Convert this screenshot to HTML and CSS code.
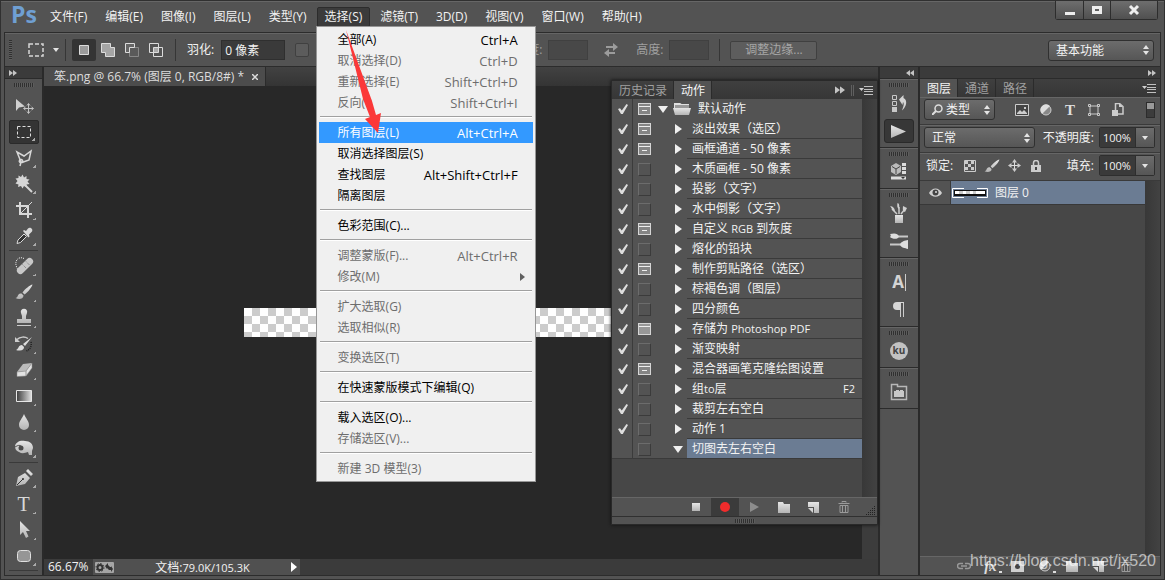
FILE: index.html
```html
<!DOCTYPE html>
<html lang="zh-CN">
<head>
<meta charset="utf-8">
<title>Ps</title>
<link rel="stylesheet" href="styles.css">
</head>
<body>
<svg class="defs" aria-hidden="true">
  <defs>
    <linearGradient id="silver" x1="0" y1="0" x2="0" y2="1"><stop offset="0" stop-color="#e6e6e6"/><stop offset="1" stop-color="#b4b4b4"/></linearGradient>
    <linearGradient id="fade"><stop offset="0" stop-color="#3c3c3c"/><stop offset="1" stop-color="#e0e0e0"/></linearGradient>
    <symbol id="updown" viewBox="0 0 6 10"><path d="M0 4 3 0l3 4zM0 6h6L3 10z" fill="#e4e4e4"/></symbol>
    <symbol id="down" viewBox="0 0 6 4"><path d="M0 0h6L3 4z" fill="#e4e4e4"/></symbol>
    <symbol id="right" viewBox="0 0 7 10"><path d="M0 0 7 5 0 10z" fill="#f0f0f0"/></symbol>
    <symbol id="open" viewBox="0 0 10 7"><path d="M0 0h10L5 7z" fill="#f0f0f0"/></symbol>
    <symbol id="rewind" viewBox="0 0 8 6"><path d="M4 0v6L0 3zM8 0v6L4 3z" fill="#c4c4c4"/></symbol>
    <symbol id="forward" viewBox="0 0 8 6"><path d="M0 0v6l4-3zM4 0v6l4-3z" fill="#c4c4c4"/></symbol>
    <symbol id="flyout" viewBox="0 0 14 9"><path d="M0 2h5L2.500 5z" fill="#d0d0d0"/><path d="M5 .5h9M5 3.500h9M5 5.500h9M5 8.500h9" stroke="#c0c0c0"/></symbol>
    <symbol id="folder" viewBox="0 0 12 11"><path d="M0 0h5l1 2h6v9H0z" fill="url(#silver)"/></symbol>
    <symbol id="sheet" viewBox="0 0 12 11"><path d="M0 0h11v11H6V5H0z" fill="url(#silver)"/><path d="M0 6h5v5z" fill="#d5d5d5"/></symbol>
    <symbol id="trash" viewBox="0 0 12 12"><path d="M4 1.500V.5h4v1M.5 2.500h11M2 4.500v7h8v-7zM4.500 5v6M7.500 5v6" fill="none" stroke="#9a9a9a"/></symbol>
    <symbol id="brush" viewBox="0 0 18 16"><path d="M17.500.5C15 1 10 5 7.500 8.500l2 2C13 8 17 3 17.500.5zM6.500 9.500C4 9 3 11 2.500 12.500c-.5 1-1 1-2 1.500 2.500 1.500 8 1.500 8-2.500z" fill="url(#silver)"/></symbol>
  </defs>
</svg>

<div class="app">
  <header class="titlebar">
    <span class="logo">Ps</span>
    <nav class="menus">
      <button>文件(F)</button>
      <button>编辑(E)</button>
      <button>图像(I)</button>
      <button>图层(L)</button>
      <button>类型(Y)</button>
      <div class="menu-host">
        <button class="is-open" aria-expanded="true">选择(S)</button>
        <div class="dropdown">
          <button>全部(A)<kbd>Ctrl+A</kbd></button>
          <button disabled>取消选择(D)<kbd>Ctrl+D</kbd></button>
          <button disabled>重新选择(E)<kbd>Shift+Ctrl+D</kbd></button>
          <button disabled>反向(I)<kbd>Shift+Ctrl+I</kbd></button>
          <hr>
          <button class="is-hot">所有图层(L)<kbd>Alt+Ctrl+A</kbd></button>
          <button>取消选择图层(S)</button>
          <button>查找图层<kbd>Alt+Shift+Ctrl+F</kbd></button>
          <button>隔离图层</button>
          <hr>
          <button>色彩范围(C)...</button>
          <hr>
          <button disabled>调整蒙版(F)...<kbd>Alt+Ctrl+R</kbd></button>
          <button class="has-sub" disabled>修改(M)<svg width="5" height="8" viewBox="0 0 5 8"><path d="M0 0 5 4 0 8z" fill="#606060"/></svg></button>
          <hr>
          <button disabled>扩大选取(G)</button>
          <button disabled>选取相似(R)</button>
          <hr>
          <button disabled>变换选区(T)</button>
          <hr>
          <button>在快速蒙版模式下编辑(Q)</button>
          <hr>
          <button>载入选区(O)...</button>
          <button disabled>存储选区(V)...</button>
          <hr>
          <button disabled>新建 3D 模型(3)</button>
          <svg class="pointer" width="40" height="106" viewBox="0 0 40 106"><path d="M2 1 28 72 32 86 37 84 34 104 21 90 26 88 19 70z" fill="#fb3838"/></svg>
        </div>
      </div>
      <button>滤镜(T)</button>
      <button>3D(D)</button>
      <button>视图(V)</button>
      <button>窗口(W)</button>
      <button>帮助(H)</button>
    </nav>
    <div class="window-buttons">
      <button aria-label="最小化"><svg width="12" height="12" viewBox="0 0 12 12"><path d="M1 8h10v3H1z" fill="#eee"/></svg></button>
      <button aria-label="最大化"><svg width="12" height="12" viewBox="0 0 12 12"><path d="M2.500 3.500h7v5h-7z" fill="none" stroke="#eee" stroke-width="3"/></svg></button>
      <button class="close" aria-label="关闭"><svg width="12" height="12" viewBox="0 0 12 12"><path d="M2 2l8 8M10 2l-8 8" stroke="#eee" stroke-width="3"/></svg></button>
    </div>
  </header>

  <div class="frame">
    <section class="options">
      <i class="grip-v"></i>
      <svg class="preset" width="16" height="14" viewBox="0 0 16 14"><path d="M1 1h14v12H1z" fill="none" stroke="#d8d8d8" stroke-width="1.500" stroke-dasharray="4 2"/></svg>
      <svg width="6" height="4"><use href="#down"/></svg>
      <i class="rule"></i>
      <div class="modes">
        <button class="is-on" aria-label="新选区"><svg width="14" height="14" viewBox="0 0 14 14"><path d="M2.500 2.500h9v9h-9z" fill="#9b9b9b" stroke="#dcdcdc"/></svg></button>
        <button aria-label="添加到选区"><svg width="14" height="14" viewBox="0 0 14 14"><path d="M.5.5h9v4h4v9h-9v-4h-4z" fill="#a5a5a5" stroke="#dcdcdc"/></svg></button>
        <button aria-label="从选区减去"><svg width="14" height="14" viewBox="0 0 14 14"><path d="M4.500 4.500h9v9h-9z" fill="#5a5a5a" stroke="#888"/><path d="M.5.5h9v4h-5v5h-4z" fill="#666" stroke="#dcdcdc"/></svg></button>
        <button aria-label="与选区交叉"><svg width="14" height="14" viewBox="0 0 14 14"><path d="M4.500 4.500h5v5h-5z" fill="#aaa"/><path d="M.5.5h9v9h-9zM4.500 4.500h9v9h-9z" fill="none" stroke="#dcdcdc"/></svg></button>
      </div>
      <i class="rule"></i>
      <label for="feather">羽化:</label>
      <input id="feather" class="feather" type="text" value="0 像素">
      <input class="tick" type="checkbox" aria-label="消除锯齿" disabled>
      <label class="dim" for="w">宽度:</label>
      <input id="w" class="size" type="text" disabled>
      <svg width="16" height="14" viewBox="0 0 16 14"><path d="M3 3h7V0l5 4-5 4V5H3zM12 9H6V6L1 10l5 4v-3h6z" fill="#9c9c9c"/></svg>
      <label class="dim" for="h">高度:</label>
      <input id="h" class="size" type="text" disabled>
      <i class="rule"></i>
      <button class="refine" disabled>调整边缘...</button>
      <span class="select workspace-select"><select aria-label="工作区"><option>基本功能</option></select><svg width="6" height="10"><use href="#updown"/></svg></span>
    </section>

    <main class="workspace">
      <aside class="tools">
        <div class="dock-head left"><svg width="8" height="6"><use href="#forward"/></svg></div>
        <i class="grip"></i>
        <button class="tool plain" aria-label="移动"><svg width="20" height="20" viewBox="0 0 20 20"><path d="M2 3v12l3-3.500 6-1z" fill="#d0d0d0"/><path d="M14.500 8v9M10 12.500h9M13 9.500l1.500-2 1.500 2M13 15.500l1.500 2 1.500-2M11.500 11l-2 1.500 2 1.500M17.500 11l2 1.500-2 1.500" fill="none" stroke="#c4c4c4"/></svg></button>
        <button class="tool is-on" aria-label="矩形选框"><svg width="20" height="20" viewBox="0 0 20 20"><path d="M3.500 4.500h13v11h-13z" fill="none" stroke="#dedede" stroke-dasharray="3 2"/></svg></button>
        <button class="tool" aria-label="套索"><svg width="20" height="20" viewBox="0 0 20 20"><path d="M7 14 3 4l7 4 7-5-2 9-7 2.500M5.500 12.500c0-2 4-1 3 1s-4 1-3-1zM7 14l-1 4" fill="none" stroke="#d8d8d8" stroke-width="1.500"/></svg></button>
        <button class="tool" aria-label="魔棒"><svg width="20" height="20" viewBox="0 0 20 20"><path d="m8.500.500 1.500 3 2.500-1.500v3l3 .5-2 2 2 2.500-3 .5.500 3-3-1.500-1.500 2.500L7 12l-3 1 .5-2.500-3-1L3.500 7l-2-2.500 3-.5V1.500L7 3z" fill="#d6d6d6"/><path d="m11 11 7 7" stroke="#d6d6d6" stroke-width="2"/></svg></button>
        <button class="tool" aria-label="裁剪"><svg width="20" height="20" viewBox="0 0 20 20"><path d="M6 2v12h12M2 6h12v12" fill="none" stroke="#d8d8d8" stroke-width="2"/><path d="M6.500 13.500 18 2" stroke="#d8d8d8"/></svg></button>
        <button class="tool" aria-label="吸管"><svg width="20" height="20" viewBox="0 0 20 20"><path d="M3 17.500 4 14l6-6 2.500 2.500-6 6z" fill="#333" stroke="#ddd"/><path d="m9 5 1-1 2 1 2-2.500c2-2 5.500.5 4 3L15 8.500l.5 2-1 1z" fill="#d8d8d8"/></svg></button>
        <hr>
        <button class="tool" aria-label="修复画笔"><svg width="20" height="20" viewBox="0 0 20 20"><path d="M10 2.500C5 0 1 4 2 9s4 6 4 6" fill="none" stroke="#eee" stroke-dasharray="1 1"/><rect x="1" y="6.500" width="20" height="7" rx="3.500" transform="rotate(-45 11 10)" fill="#c8c8c8"/><path d="m8.500 8.500 4 4M12 5.500l3.500 3.500" stroke="#777" stroke-dasharray="1 1"/></svg></button>
        <button class="tool" aria-label="画笔"><svg width="18" height="16"><use href="#brush"/></svg></button>
        <button class="tool" aria-label="仿制图章"><svg width="20" height="20" viewBox="0 0 20 20"><path d="M7 5a3.200 3.200 0 1 1 6 0l-1 3v3h5v4H3v-4h5V8z" fill="url(#silver)"/><path d="M3 17.500h14" stroke="#ccc"/></svg></button>
        <button class="tool" aria-label="历史记录画笔"><svg width="20" height="20" viewBox="0 0 20 20"><path d="M3 5.500c3-3 8-3 11-1" fill="none" stroke="#ccc" stroke-width="1.500"/><path d="M1 3v5h5z" fill="#ccc"/><path d="M18 3 9 10l2 2zM8 11c-4 0-3 4-6 5 3 1 8 1 8-3z" fill="#ddd"/><path d="M17 8c1 4-1 8-5 9" fill="none" stroke="#222" stroke-width="1.500" stroke-dasharray="1 1"/></svg></button>
        <button class="tool" aria-label="橡皮擦"><svg width="20" height="20" viewBox="0 0 20 20"><path d="m9 4 9-1-6 8-9 1z" fill="#bbb"/><path d="m3 12 9-1v5l-9 .5zM12 11l6-8v5l-6 8z" fill="#e2e2e2" stroke="#888" stroke-width=".5"/></svg></button>
        <button class="tool" aria-label="渐变"><svg width="20" height="20" viewBox="0 0 20 20"><path d="M2.500 4.500h15v11h-15z" fill="url(#fade)" stroke="#e6e6e6"/></svg></button>
        <button class="tool" aria-label="模糊"><svg width="20" height="20" viewBox="0 0 20 20"><path d="M10 2c2 5 5 7 5 11a5 5 0 0 1-10 0C5 9 8 7 10 2z" fill="url(#silver)"/></svg></button>
        <button class="tool" aria-label="海绵"><svg width="20" height="20" viewBox="0 0 20 20"><path d="M1 8c1-4 5-6 10-5 5 0 8 3 8 7l-1 3v4h-3l-1-3c-3 1-6 2-9 0-3-1-4-3-4-6z" fill="url(#silver)"/><circle cx="7" cy="10" r="2.500" fill="#4a4a4a"/><path d="M1 9c3-2 5-2 6-1" fill="none" stroke="#555"/></svg></button>
        <hr>
        <button class="tool" aria-label="钢笔"><svg width="20" height="20" viewBox="0 0 20 20"><path d="m2 18 2-9 7-4 5 5-5 6zM12 3l2-2 5 5-2 2z" fill="url(#silver)"/><path d="m3 17 6-6" stroke="#333"/><circle cx="9" cy="11" r="1" fill="#333"/></svg></button>
        <button class="tool type" aria-label="文字">T</button>
        <button class="tool" aria-label="路径选择"><svg width="20" height="20" viewBox="0 0 20 20"><path d="M6 1v14l3-3 3 6 2.500-1.500L12 11h4z" fill="url(#silver)"/></svg></button>
        <button class="tool" aria-label="圆角矩形"><svg width="20" height="20" viewBox="0 0 20 20"><rect x="3.500" y="4.500" width="13" height="11" rx="3" fill="#969696" stroke="#e0e0e0"/></svg></button>
        <hr>
      </aside>

      <section class="document">
        <div class="doc-tabs">
          <div class="doc-tab"><span>笨.png @ 66.7% (图层 0, RGB/8#) *</span><button aria-label="关闭标签"><svg width="6" height="6" viewBox="0 0 6 6"><path d="m0 0 6 6M6 0 0 6" stroke="#ddd" stroke-width="1.500"/></svg></button></div>
        </div>
        <div class="canvas"><div class="artboard"></div></div>
        <footer class="status">
          <span class="zoom">66.67%</span>
          <div class="info">
            <svg width="19" height="11" viewBox="0 0 19 11"><rect width="19" height="11" rx="1" fill="#a5a5a5"/><circle cx="5" cy="5.500" r="2.500" fill="none" stroke="#333" stroke-width="2"/><circle cx="5" cy="5.500" r="4" fill="none" stroke="#333" stroke-dasharray="1.500 1.600"/><path d="m10 4 3-3v2l2 2h1V4l2 3-2 3V8h-2l-2-2v1z" fill="#333"/></svg>
            <span class="docsize">文档:<span class="latin">79.0K/105.3K</span></span>
            <svg width="6" height="10" viewBox="0 0 6 10"><path d="M0 0 6 5 0 10z" fill="#fff"/></svg>
          </div>
        </footer>

        <section class="actions">
          <div class="tabs">
            <button>历史记录</button><button class="is-on">动作</button>
            <svg class="push" width="10" height="8" viewBox="0 0 8 6"><use href="#forward"/></svg>
            <i class="twin"></i>
            <svg width="14" height="9"><use href="#flyout"/></svg>
          </div>
          <div class="list-wrap">
            <ul class="list">
              <li class="set"><span><input type="checkbox" class="chk" aria-label="启用" checked></span><input type="checkbox" class="dlg" aria-label="对话框" checked><svg width="10" height="7"><use href="#open"/></svg><svg class="set-icon" width="18" height="12" viewBox="0 0 18 12"><path d="M2 0h6l1 2h7v3H2z" fill="#999"/><path d="M1 0h6l1 1h8v1H2v3H1z" fill="#e0e0e0"/><path d="M0 5h18l-2 7H2z" fill="url(#silver)"/></svg><b>默认动作</b></li>
              <li><span><input type="checkbox" class="chk" aria-label="启用" checked></span><input type="checkbox" class="dlg" aria-label="对话框" checked><svg width="7" height="10"><use href="#right"/></svg><b>淡出效果（选区）</b></li>
              <li><span><input type="checkbox" class="chk" aria-label="启用" checked></span><input type="checkbox" class="dlg" aria-label="对话框" checked><svg width="7" height="10"><use href="#right"/></svg><b>画框通道 - 50 像素</b></li>
              <li><span><input type="checkbox" class="chk" aria-label="启用" checked></span><input type="checkbox" class="dlg" aria-label="对话框"><svg width="7" height="10"><use href="#right"/></svg><b>木质画框 - 50 像素</b></li>
              <li><span><input type="checkbox" class="chk" aria-label="启用" checked></span><input type="checkbox" class="dlg" aria-label="对话框"><svg width="7" height="10"><use href="#right"/></svg><b>投影（文字）</b></li>
              <li><span><input type="checkbox" class="chk" aria-label="启用" checked></span><input type="checkbox" class="dlg" aria-label="对话框"><svg width="7" height="10"><use href="#right"/></svg><b>水中倒影（文字）</b></li>
              <li><span><input type="checkbox" class="chk" aria-label="启用" checked></span><input type="checkbox" class="dlg" aria-label="对话框" checked><svg width="7" height="10"><use href="#right"/></svg><b>自定义 <span class="latin">RGB</span> 到灰度</b></li>
              <li><span><input type="checkbox" class="chk" aria-label="启用" checked></span><input type="checkbox" class="dlg" aria-label="对话框"><svg width="7" height="10"><use href="#right"/></svg><b>熔化的铅块</b></li>
              <li><span><input type="checkbox" class="chk" aria-label="启用" checked></span><input type="checkbox" class="dlg" aria-label="对话框" checked><svg width="7" height="10"><use href="#right"/></svg><b>制作剪贴路径（选区）</b></li>
              <li><span><input type="checkbox" class="chk" aria-label="启用" checked></span><input type="checkbox" class="dlg" aria-label="对话框"><svg width="7" height="10"><use href="#right"/></svg><b>棕褐色调（图层）</b></li>
              <li><span><input type="checkbox" class="chk" aria-label="启用" checked></span><input type="checkbox" class="dlg" aria-label="对话框"><svg width="7" height="10"><use href="#right"/></svg><b>四分颜色</b></li>
              <li><span><input type="checkbox" class="chk" aria-label="启用" checked></span><input type="checkbox" class="dlg full" aria-label="对话框" checked><svg width="7" height="10"><use href="#right"/></svg><b>存储为 <span class="latin">Photoshop PDF</span></b></li>
              <li><span><input type="checkbox" class="chk" aria-label="启用" checked></span><input type="checkbox" class="dlg" aria-label="对话框"><svg width="7" height="10"><use href="#right"/></svg><b>渐变映射</b></li>
              <li><span><input type="checkbox" class="chk" aria-label="启用" checked></span><input type="checkbox" class="dlg" aria-label="对话框" checked><svg width="7" height="10"><use href="#right"/></svg><b>混合器画笔克隆绘图设置</b></li>
              <li><span><input type="checkbox" class="chk" aria-label="启用" checked></span><input type="checkbox" class="dlg" aria-label="对话框"><svg width="7" height="10"><use href="#right"/></svg><b>组<span class="latin">to</span>层<span class="latin key">F2</span></b></li>
              <li><span><input type="checkbox" class="chk" aria-label="启用" checked></span><input type="checkbox" class="dlg" aria-label="对话框"><svg width="7" height="10"><use href="#right"/></svg><b>裁剪左右空白</b></li>
              <li><span><input type="checkbox" class="chk" aria-label="启用" checked></span><input type="checkbox" class="dlg" aria-label="对话框"><svg width="7" height="10"><use href="#right"/></svg><b>动作 1</b></li>
              <li class="is-selected"><span></span><input type="checkbox" class="dlg" aria-label="对话框"><svg width="10" height="7"><use href="#open"/></svg><b>切图去左右空白</b></li>
            </ul>
            <div class="scroll"></div>
          </div>
          <div class="panel-foot">
            <button aria-label="停止"><svg width="8" height="8" viewBox="0 0 8 8"><path d="M0 0h8v8H0z" fill="url(#silver)"/></svg></button>
            <button class="is-on" aria-label="录制"><svg width="10" height="10" viewBox="0 0 10 10"><circle cx="5" cy="5" r="5" fill="#f02c2c"/></svg></button>
            <button aria-label="播放"><svg width="10" height="10" viewBox="0 0 10 10"><path d="M1 0 10 5 1 10z" fill="#8d8d8d"/></svg></button>
            <button aria-label="新建组"><svg width="12" height="11"><use href="#folder"/></svg></button>
            <button aria-label="新建动作"><svg width="12" height="11"><use href="#sheet"/></svg></button>
            <button aria-label="删除"><svg width="12" height="12"><use href="#trash"/></svg></button>
            <svg class="resize" width="10" height="10" viewBox="0 0 10 10"><path d="M9.500 0v10M7.500 2v8M5.500 4v6M3.500 6v4M1.500 8v2" stroke="#222" stroke-dasharray="1 1"/></svg>
          </div>
          <div class="panel-edge"><i class="grip"></i></div>
        </section>
      </section>

      <aside class="icon-dock">
        <div class="dock-head right"><svg width="8" height="6"><use href="#rewind"/></svg></div>
        <div class="cell"><i class="grip"></i>
          <button aria-label="历史记录"><svg width="20" height="20" viewBox="0 0 20 20"><path d="M3.500 2.500h4v4h-4zM3.500 8.500h4v4h-4z" fill="none" stroke="#c8c8c8"/><path d="M3 14h5v5H3z" fill="#c8c8c8"/><path d="M10 6.500 14.500 2v3c4.500 2 3 9-1.500 12.500 1.500-4 2.500-7 1-8.500l-.5 3z" fill="#d4d4d4"/></svg></button>
          <button class="is-on" aria-label="动作"><svg width="20" height="20" viewBox="0 0 20 20"><path d="M2 4 17 10.500 2 17z" fill="url(#silver)"/></svg></button>
        </div>
        <div class="cell"><i class="grip"></i>
          <button aria-label="3D"><svg width="20" height="20" viewBox="0 0 20 20"><path d="m7 1 5 3v6l-5 3-5-3V4z" fill="#bbb"/><path d="m3 4.500 4 2.500 4-2.500M7 7v5" fill="none" stroke="#444"/><path d="M13 1h4v3h-4zM13 5h4v3h-4zM13 9h4v3h-4zM2 14.500h15v3H2z" fill="#ddd"/><path d="M12 15h4l-2 2z" fill="#333"/></svg></button>
        </div>
        <div class="cell"><i class="grip"></i>
          <button aria-label="画笔预设"><svg width="20" height="20" viewBox="0 0 20 20"><path d="M6 12h8v8H6z" fill="url(#silver)"/><path d="M8 11 3 6M10 11V4M12 11l4-5" stroke="#ccc" stroke-width="1.500"/><path d="M1 3c3 0 5 3 5 5-3 0-3-3-5-5zM8.500 0c2 0 2 4 1.500 6-2-1-2-4-1.500-6zM14 3l4 2-2 4c-3-1-2-4-2-6z" fill="#d0d0d0"/></svg></button>
          <button aria-label="画笔"><svg width="20" height="20" viewBox="0 0 20 20"><path d="M9 5.500h10M1 13.500h11" stroke="#c8c8c8" stroke-width="2"/><path d="M1 3c4-1 8-1 9 2.500C9 9 3 8 1 6c1-1 1-2 0-3zM11 13.500c1-3 5-4 8-4.500v9c-3-1-7-1-8-4.500z" fill="#ddd"/></svg></button>
        </div>
        <div class="cell"><i class="grip"></i>
          <button class="glyph" aria-label="字符">A<i></i></button>
          <button aria-label="段落"><svg width="20" height="20" viewBox="0 0 20 20"><path d="M14.500 3v14M11.500 3v14" stroke="#ccc"/><path d="M15 2H8a4 4 0 0 0 0 8h3.500V3H15z" fill="#d6d6d6"/></svg></button>
        </div>
        <div class="cell"><i class="grip"></i>
          <button class="ku" aria-label="Kuler"><span>ku</span></button>
        </div>
        <div class="cell"><i class="grip"></i>
          <button aria-label="扩展"><svg width="20" height="20" viewBox="0 0 20 20"><path d="M2.500 17.500v-15h6v2h9v13z" fill="none" stroke="#b8b8b8" stroke-width="1.500"/><path d="M5 15V9h2V8h3v1h1V8h3v1h1v6z" fill="#c8c8c8"/></svg></button>
        </div>
      </aside>

      <aside class="layers">
        <div class="dock-head right"><svg width="8" height="6"><use href="#forward"/></svg></div>
        <div class="tabs">
          <button class="is-on">图层</button><button>通道</button><button>路径</button>
          <svg class="push" width="14" height="9"><use href="#flyout"/></svg>
        </div>
        <div class="prop filter">
          <span class="select kind"><svg class="lens" width="11" height="11" viewBox="0 0 11 11"><circle cx="6.500" cy="4.500" r="3.500" fill="none" stroke="#ddd" stroke-width="1.500"/><path d="M4 7 0 11" stroke="#ddd" stroke-width="2"/></svg><select aria-label="过滤类型"><option>类型</option></select><svg width="6" height="10"><use href="#updown"/></svg></span>
          <div class="filters">
            <button aria-label="像素图层"><svg width="14" height="12" viewBox="0 0 14 12"><path d="M.5.500h13v11H.5z" fill="#444" stroke="#ccc"/><path d="m2 9 3-3 2 2 2-2 3 3v1H2zM9 3h2v2H9z" fill="#ccc"/></svg></button>
            <button aria-label="调整图层"><svg width="12" height="12" viewBox="0 0 12 12"><circle cx="6" cy="6" r="5" fill="#888" stroke="#ccc"/><path d="M2 10A5.500 5.500 0 0 1 10 2z" fill="#ddd"/></svg></button>
            <button class="t" aria-label="文字图层">T</button>
            <button aria-label="形状图层"><svg width="12" height="12" viewBox="0 0 12 12"><path d="M2 2h8v8H2z" fill="none" stroke="#ccc"/><path d="M.5.500h2v2h-2zM9.500.500h2v2h-2zM.5 9.500h2v2h-2zM9.500 9.500h2v2h-2z" fill="#535353" stroke="#ccc"/></svg></button>
            <button aria-label="智能对象"><svg width="12" height="13" viewBox="0 0 12 13"><path d="M3.500 7V.5h4l3.500 3V11H6" fill="none" stroke="#ccc" stroke-width="1.500"/><path d="M7 0v4h4zM0 7h6v6H0z" fill="#ccc"/></svg></button>
          </div>
          <button class="switch" aria-label="过滤开关"></button>
        </div>
        <div class="prop">
          <span class="select blend"><select aria-label="混合模式"><option>正常</option></select><svg width="6" height="10"><use href="#updown"/></svg></span>
          <label class="push" for="opacity">不透明度:</label>
          <span class="num"><input id="opacity" type="text" value="100%"><button aria-label="不透明度"><svg width="6" height="4"><use href="#down"/></svg></button></span>
        </div>
        <div class="prop">
          <span class="lock-label">锁定:</span>
          <div class="locks">
            <button aria-label="锁定透明像素"><svg width="12" height="12" viewBox="0 0 12 12"><path d="M.5.500h11v11H.5z" fill="#555" stroke="#ccc"/><path d="M1 1h3v3H1zM7 1h3v3H7zM4 4h3v3H4zM1 7h3v3H1zM7 7h3v3H7z" fill="#ccc"/></svg></button>
            <button aria-label="锁定图像像素"><svg width="16" height="14" viewBox="0 0 18 16"><use href="#brush"/></svg></button>
            <button aria-label="锁定位置"><svg width="13" height="13" viewBox="0 0 13 13"><path d="M6.500 1v11M1 6.500h11" stroke="#ddd"/><path d="M4 3.500 6.500 0 9 3.500zM4 9.500 6.500 13 9 9.500zM3.500 4 0 6.500 3.500 9zM9.500 4 13 6.500 9.500 9z" fill="#ccc"/></svg></button>
            <button aria-label="锁定全部"><svg width="10" height="12" viewBox="0 0 10 12"><path d="M2.500 6V3a2.500 2.500 0 0 1 5 0v3" fill="none" stroke="#ccc" stroke-width="1.500"/><path d="M0 5h10v7H0z" fill="#ccc"/><path d="M4 7h2v3H4z" fill="#444"/></svg></button>
          </div>
          <label class="push" for="fill">填充:</label>
          <span class="num"><input id="fill" type="text" value="100%"><button aria-label="填充"><svg width="6" height="4"><use href="#down"/></svg></button></span>
        </div>
        <div class="list-wrap">
          <div class="layer-list">
            <div class="layer">
              <button class="eye" aria-label="可见性"><svg width="13" height="10" viewBox="0 0 13 10"><path d="M0 5c3-6 10-6 13 0-3 5-10 5-13 0z" fill="#d0d0d0"/><circle cx="6.500" cy="4.500" r="3" fill="#444"/><circle cx="7" cy="4" r="1" fill="#ddd"/></svg></button>
              <div class="layer-body">
                <svg width="36" height="10" viewBox="0 0 36 10"><path d="M12 .5H.5v9H12M25 .5h10.500v9H25" fill="none" stroke="#fff"/><path d="M2 2h32v6H2z" fill="#111"/><path d="M3 3h30v3H3z" fill="#fff"/><path d="M7 3h4v3H7zM14 3h4v3h-4zM21 3h3v3h-3z" fill="#ccc"/></svg>
                <span>图层 0</span>
              </div>
            </div>
          </div>
          <div class="scroll"></div>
        </div>
        <div class="layer-foot">
          <button aria-label="链接"><svg width="14" height="8" viewBox="0 0 14 8"><path d="M6 1.500H3a2.500 2.500 0 0 0 0 5h3M8 1.500h3a2.500 2.500 0 0 1 0 5H8M4 4h6" fill="none" stroke="#999" stroke-width="1.500"/></svg></button>
          <button class="fx" aria-label="样式"><em>fx</em></button>
          <button aria-label="蒙版"><svg width="13" height="11" viewBox="0 0 13 11"><path d="M0 0h13v11H0z" fill="#d0d0d0"/><circle cx="6.500" cy="5.500" r="2.500" fill="#444"/></svg></button>
          <button class="more" aria-label="调整"><svg width="12" height="12" viewBox="0 0 12 12"><circle cx="6" cy="6" r="5" fill="#666" stroke="#ccc"/><path d="M2 10A5.500 5.500 0 0 1 10 2z" fill="#ddd"/></svg></button>
          <button aria-label="新建组"><svg width="12" height="11"><use href="#folder"/></svg></button>
          <button aria-label="新建图层"><svg width="12" height="11"><use href="#sheet"/></svg></button>
          <button aria-label="删除图层"><svg width="12" height="12"><use href="#trash"/></svg></button>
        </div>
      </aside>
    </main>
  </div>
  <div class="watermark">https://blog.csdn.net/jx520</div>
</div>
</body>
</html>
```
FILE: styles.css
```css
* { box-sizing: border-box; }

body {
  margin: 0;
  background: #535353;
  color: #f2f2f2;
  font: 12px/16px "Open Sans", "Noto Sans CJK SC", sans-serif;
}

button, input, select {
  margin: 0;
  padding: 0;
  border: 0;
  border-radius: 0;
  background: none;
  color: inherit;
  font: inherit;
  appearance: none;
}

svg { display: block; flex: none; }
i, em, b { font-style: normal; font-weight: normal; }
.defs { position: absolute; width: 0; height: 0; }
.latin { font-size: 11px; }
.push { margin-left: auto; }

.app {
  position: relative;
  display: flex;
  flex-direction: column;
  height: 100vh;
  border: 1px solid #303030;
  overflow: hidden;
}

/* title bar */
.titlebar {
  display: flex;
  align-items: flex-start;
  height: 31px;
  flex: none;
  border-top: 1px solid #666;
}
.logo {
  width: 31px;
  margin: 0 0 0 10px;
  color: #6f9fd2;
  font: bold 23px/24px "Open Sans", sans-serif;
}
.menus { display: flex; gap: 2px; margin-top: 5px; }
.menus > button, .is-open {
  display: block;
  height: 20px;
  padding: 0 8px;
  line-height: 18px;
  white-space: nowrap;
}
.menu-host { position: relative; }
.menus .is-open {
  padding: 0 7px;
  border: 1px solid #2c2c2c;
  border-radius: 2px;
  background: #3b3b3b;
}
.window-buttons {
  display: flex;
  margin: -1px 6px 0 auto;
  border: 1px solid #2d2d2d;
  border-top: 0;
  border-radius: 0 0 3px 3px;
}
.window-buttons button {
  display: grid;
  place-items: center;
  width: 27px;
  height: 18px;
  border-left: 1px solid #2d2d2d;
  background: linear-gradient(#6e6e6e, #505050);
}
.window-buttons button:first-child { border-left: 0; }
.window-buttons .close { width: 47px; }

/* drop-down menu */
.dropdown {
  position: absolute;
  z-index: 20;
  top: 100%;
  left: -1px;
  width: 220px;
  margin-top: -1px;
  padding: 2px;
  border: 1px solid #979797;
  background: #f0f0f0;
  color: #000;
}
.dropdown button {
  display: flex;
  align-items: center;
  justify-content: space-between;
  width: 100%;
  height: 21px;
  padding: 0 15px 0 19px;
  white-space: nowrap;
}
.dropdown button:disabled { color: #6d6d6d; }
.dropdown .has-sub { padding-right: 8px; }
.dropdown .is-hot { background: #3399ff; color: #fff; }
.dropdown kbd { font: 13px/16px "Open Sans", sans-serif; }
.dropdown hr {
  height: 9px;
  margin: 0 1px;
  border: 0;
  background: linear-gradient(#a0a0a0, #a0a0a0) 0 3px / 100% 1px no-repeat, linear-gradient(#fff, #fff) 0 4px / 100% 1px no-repeat;
}
.pointer { position: absolute; top: 2px; left: 27px; }

/* options bar */
.frame {
  display: flex;
  flex: 1;
  flex-direction: column;
  min-height: 0;
  margin: 0 3px 3px;
  border: 1px solid #2c2c2c;
}
.options {
  display: flex;
  flex: none;
  align-items: center;
  height: 34px;
  padding: 0 6px 0 4px;
  border-top: 1px solid #656565;
  border-bottom: 1px solid #2c2c2c;
  white-space: nowrap;
}
.grip-v {
  width: 3px;
  height: 20px;
  margin-right: 16px;
  background: repeating-linear-gradient(#303030 0 1px, #5d5d5d 1px 2px);
}
.preset { margin-right: 9px; }
.rule { width: 1px; height: 22px; margin: 0 6px; background: #363636; }
.modes { display: flex; margin-right: 4px; }
.modes button {
  display: grid;
  place-items: center;
  width: 24px;
  height: 22px;
  border-radius: 2px;
}
.modes .is-on { background: #343434; }
.modes + .rule { margin: 0 11px 0 3px; }
.options input[type="text"] {
  height: 20px;
  border: 1px solid #2f2f2f;
  background: #3a3a3a;
}
.options .feather { width: 64px; margin: 0 10px 0 7px; padding: 0 3px; }
.options input.size { width: 40px; margin: 0 15px 0 6px; background: #484848; border-color: #404040; }
.tick { width: 14px; height: 14px; margin-right: 206px; border: 1px solid #404040; border-radius: 2px; background: #5c5c5c; }
.dim { color: #a0a0a0; }
.options svg + .dim { margin-left: 17px; }
.options .size + .rule { margin: 0 10px 0 -5px; }
.refine {
  width: 87px;
  height: 19px;
  border: 1px solid #404040;
  border-radius: 2px;
  background: #5d5d5d;
  color: #a6a6a6;
  line-height: 16px;
}
.select {
  position: relative;
  display: flex;
  align-items: center;
  height: 21px;
  border: 1px solid #303030;
  border-radius: 3px;
  background: linear-gradient(#6c6c6c, #565656);
}
.select select { width: 100%; height: 19px; padding-left: 7px; line-height: 17px; }
.select option { background: #535353; }
.select svg:last-child { position: absolute; right: 4px; pointer-events: none; }
.workspace-select { width: 106px; margin-left: auto; }

/* docks */
.workspace { display: flex; flex: 1; min-height: 0; background: #2a2a2a; gap: 2px; }
.dock-head {
  display: flex;
  flex: none;
  align-items: center;
  align-self: stretch;
  height: 12px;
  padding: 0 4px;
  border-bottom: 1px solid #2b2b2b;
  background: #3b3b3b;
}
.dock-head.right { justify-content: flex-end; }
.grip {
  display: block;
  flex: none;
  width: 20px;
  height: 4px;
  background: repeating-linear-gradient(90deg, #303030 0 1px, #5d5d5d 1px 2px);
}
.tools {
  display: flex;
  flex: none;
  flex-direction: column;
  align-items: center;
  width: 37px;
  overflow: hidden;
  background: #535353;
}
.tools > .grip { margin: 4px 0 6px; }
.tools hr { flex: none; width: 29px; height: 1px; margin: 1px 0 2px; border: 0; background: #3a3a3a; }
.tool {
  position: relative;
  display: grid;
  flex: none;
  place-items: center;
  width: 30px;
  height: 24px;
  margin: 1px 0;
  border-radius: 2px;
}
.tool.is-on { background: #343434; border: 1px solid #2a2a2a; }
.tool::after {
  content: "";
  position: absolute;
  right: 3px;
  bottom: 2px;
  width: 3px;
  height: 3px;
  background: linear-gradient(135deg, transparent 50%, #aaa 50%);
}
.tool.plain::after { display: none; }
.tool.type { color: #d8d8d8; font: 20px/20px "Liberation Serif", serif; }

/* document */
.document { position: relative; display: flex; flex: 1; flex-direction: column; min-width: 0; }
.doc-tabs { display: flex; flex: none; height: 19px; background: linear-gradient(#424242, #343434); }
.doc-tab {
  display: flex;
  align-items: center;
  gap: 8px;
  padding: 0 7px 0 10px;
  border-right: 1px solid #2b2b2b;
  background: #4c4c4c;
  color: #dcdcdc;
  white-space: nowrap;
}
.canvas {
  display: flex;
  flex: 1;
  align-items: center;
  justify-content: center;
  padding-right: 16px;
  background: linear-gradient(#3c3c3c, #3c3c3c) right / 16px 100% no-repeat #282828;
}
.artboard {
  width: 418px;
  height: 29px;
  background: repeating-conic-gradient(#ccc 0 25%, #fff 0 50%) 0 0 / 16px 16px;
}
.status {
  display: flex;
  flex: none;
  height: 16px;
  background: #3b3b3b;
  line-height: 15px;
}
.zoom { width: 49px; padding-left: 4px; }
.info {
  display: flex;
  align-items: center;
  justify-content: space-between;
  width: 207px;
  padding: 0 3px 0 2px;
  background: #505050;
}

/* actions panel */
.actions {
  position: absolute;
  top: 13px;
  right: 0;
  display: flex;
  flex-direction: column;
  width: 267px;
  height: 445px;
  border: 1px solid #292929;
  background: #535353;
  box-shadow: 0 0 3px #111;
}
.tabs {
  display: flex;
  flex: none;
  align-items: center;
  height: 18px;
  padding-right: 4px;
  background: linear-gradient(#3f3f3f, #363636);
}
.tabs button {
  height: 18px;
  padding: 0 6px 0 7px;
  border-right: 1px solid #2b2b2b;
  color: #a0a0a0;
  line-height: 17px;
}
.tabs .is-on { background: #535353; color: #f4f4f4; }
.twin { width: 3px; height: 11px; margin: 0 5px 0 6px; border: 1px solid #606060; border-width: 0 1px; }
.list-wrap { display: flex; flex: 1; min-height: 0; background: #474747; }
.scroll { flex: none; width: 15px; background: linear-gradient(90deg, #383838, #424242); }
.list { flex: 1; margin: 0; padding: 0; list-style: none; }
.list li {
  display: grid;
  grid-template-columns: 21px 36px 18px 1fr;
  align-items: center;
  height: 20px;
  background: #535353;
}
.list li > span {
  display: grid;
  place-items: center end;
  height: 20px;
  padding-right: 4px;
  border-right: 1px solid #3b3b3b;
}
.list li > b {
  height: 20px;
  padding: 0 7px 0 5px;
  border-bottom: 1px solid #3a3a3a;
  line-height: 19px;
  white-space: nowrap;
}
.list .key { float: right; }
.list li:not(.set) > svg { justify-self: center; }
.list .set { grid-template-columns: 21px 25px 15px 20px 1fr; }
.list .set > b { border-bottom: 0; }
.list .is-selected > b { background: #6b7c93; }
.list .is-selected { background: linear-gradient(#3a3a3a, #3a3a3a) bottom / 100% 1px no-repeat #535353; }
.chk { width: 10px; height: 10px; background: #dedede; clip-path: polygon(0 50%, 20% 42%, 38% 65%, 85% 0, 100% 10%, 48% 100%, 30% 100%); }
.dlg { width: 13px; height: 13px; margin-left: 5px; border: 1px solid #3b3b3b; border-top-color: #6c6c6c; border-left-color: #6c6c6c; }
.dlg:checked {
  height: 12px;
  border: 1px solid #d6d6d6;
  background: linear-gradient(#eee, #eee) 0 2px / 100% 1px no-repeat, linear-gradient(#eee, #eee) 50% 6px / 5px 1px no-repeat, #858585;
}
.dlg.full:checked { background: linear-gradient(#eee, #eee) 0 2px / 100% 1px no-repeat, #989898; }
.panel-foot {
  display: flex;
  flex: none;
  align-items: center;
  justify-content: flex-end;
  height: 20px;
  border-top: 1px solid #666;
  border-bottom: 1px solid #303030;
}
.panel-foot button { display: grid; place-items: center; width: 30px; height: 18px; }
.panel-foot .is-on { width: 28px; background: #3b3b3b; }
.resize { align-self: flex-end; margin: 0 2px 0 6px; }
.panel-edge { display: grid; flex: none; place-items: center; height: 7px; }

/* collapsed icon dock */
.icon-dock { flex: none; width: 38px; background: #535353; }
.cell {
  display: flex;
  flex-direction: column;
  align-items: center;
  padding-bottom: 2px;
  border-top: 1px solid #656565;
  border-bottom: 1px solid #2b2b2b;
}
.cell .grip { margin: 3px 0 2px; }
.cell button {
  display: grid;
  place-items: center;
  width: 30px;
  height: 24px;
  margin: 2px 0;
  border-radius: 3px;
}
.cell .is-on { border: 1px solid #2a2a2a; background: #373737; }
.cell .glyph {
  display: flex;
  align-items: center;
  justify-content: center;
  gap: 1px;
  color: #d4d4d4;
  font: bold 17px/20px "Open Sans", sans-serif;
}
.glyph i { width: 1px; height: 17px; background: #ccc; }
.ku span {
  width: 18px;
  height: 18px;
  border-radius: 9px;
  background: #c2c2c2;
  color: #444;
  font: bold 10px/16px "Open Sans", sans-serif;
  text-align: center;
}

/* layers panel */
.layers { display: flex; flex: none; flex-direction: column; width: 240px; background: #535353; }
.prop {
  display: flex;
  flex: none;
  align-items: center;
  height: 28px;
  padding: 0 5px 3px 4px;
  border-top: 1px solid #666;
  border-bottom: 1px solid #3a3a3a;
  white-space: nowrap;
}
.kind { width: 71px; }
.kind .lens { position: absolute; left: 7px; pointer-events: none; }
.kind select { padding-left: 21px; }
.blend { width: 111px; }
.filters { display: flex; margin-left: 15px; }
.filters button, .locks button { display: grid; place-items: center; width: 24px; height: 18px; }
.filters .t { color: #ddd; font: bold 15px/16px "Liberation Serif", serif; }
.switch { width: 9px; height: 16px; margin-left: auto; border: 1px solid #2c2c2c; background: linear-gradient(#999 0 45%, #3c3c3c 45%); }
.num { display: flex; margin-left: 5px; height: 21px; border: 1px solid #2e2e2e; border-radius: 2px; }
.num input { width: 35px; padding: 0 0 0 3px; background: #3a3a3a; font-size: 11px; line-height: 17px; }
.num button {
  display: grid;
  place-items: center;
  width: 19px;
  border-left: 1px solid #2e2e2e;
  background: linear-gradient(#6c6c6c, #565656);
}
.lock-label { margin-left: 2px; }
.locks { display: flex; margin-left: 6px; }
.locks button { width: 22px; }
.layer-list { flex: 1; }
.layer { display: flex; height: 24px; border-bottom: 1px solid #383838; background: #535353; }
.eye { display: grid; place-items: center; width: 31px; border-right: 1px solid #3a3a3a; }
.layer-body { display: flex; flex: 1; align-items: center; gap: 7px; padding-left: 1px; background: #6b7c93; }
.layer-foot {
  display: flex;
  flex: none;
  align-items: center;
  justify-content: flex-end;
  height: 19px;
  padding-right: 21px;
  border-top: 1px solid #666;
}
.layer-foot button { position: relative; display: grid; place-items: center; width: 27px; height: 18px; }
.fx em { font: italic bold 15px/16px "Liberation Serif", serif; color: #ddd; }
.fx::after, .more::after {
  content: "";
  position: absolute;
  right: 2px;
  bottom: 2px;
  width: 3px;
  height: 2px;
  background: #ddd;
}

.watermark {
  position: absolute;
  z-index: 30;
  right: 8px;
  bottom: 8px;
  color: rgba(255, 255, 255, .62);
  font: 16px/20px "Liberation Sans", sans-serif;
  pointer-events: none;
}
```
